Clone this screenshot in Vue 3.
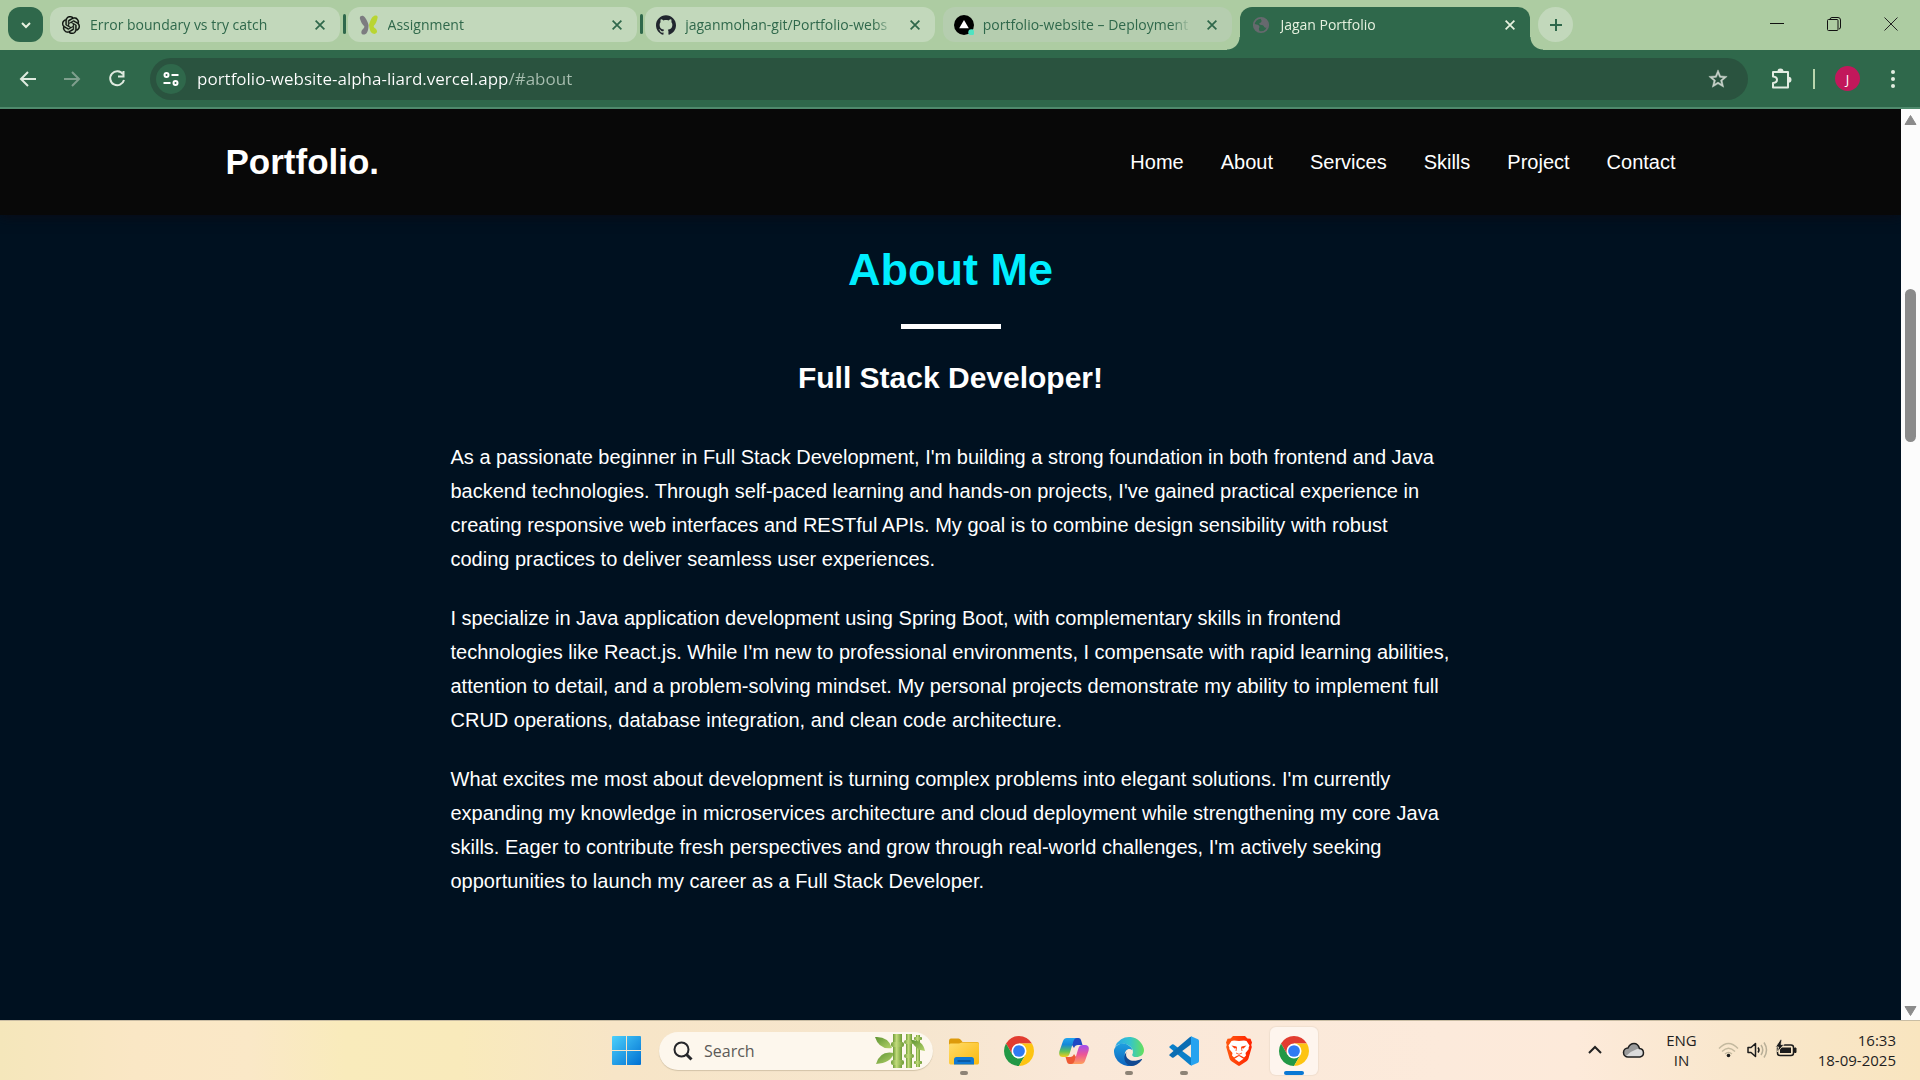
<script setup>
const links = ['Home', 'About', 'Services', 'Skills', 'Project', 'Contact']

const tabs = [
  { title: 'Error boundary vs try catch', icon: 'openai', split: true },
  { title: 'Assignment', icon: 'leaf', split: true },
  { title: 'jaganmohan-git/Portfolio-webs', icon: 'github' },
  { title: 'portfolio-website – Deployment', icon: 'vercel', dim: true },
  { title: 'Jagan Portfolio', icon: 'globe', active: true }
]

const paragraphs = [
  "As a passionate beginner in Full Stack Development, I'm building a strong foundation in both frontend and Java backend technologies. Through self-paced learning and hands-on projects, I've gained practical experience in creating responsive web interfaces and RESTful APIs. My goal is to combine design sensibility with robust coding practices to deliver seamless user experiences.",
  "I specialize in Java application development using Spring Boot, with complementary skills in frontend technologies like React.js. While I'm new to professional environments, I compensate with rapid learning abilities, attention to detail, and a problem-solving mindset. My personal projects demonstrate my ability to implement full CRUD operations, database integration, and clean code architecture.",
  "What excites me most about development is turning complex problems into elegant solutions. I'm currently expanding my knowledge in microservices architecture and cloud deployment while strengthening my core Java skills. Eager to contribute fresh perspectives and grow through real-world challenges, I'm actively seeking opportunities to launch my career as a Full Stack Developer."
]

const apps = [
  { name: 'File Explorer', icon: 'folder', running: true },
  { name: 'Google Chrome', icon: 'chrome' },
  { name: 'Copilot', icon: 'copilot' },
  { name: 'Microsoft Edge', icon: 'edge', running: true },
  { name: 'Visual Studio Code', icon: 'vscode', running: true },
  { name: 'Brave', icon: 'brave' },
  { name: 'Chrome window', icon: 'chrome', current: true }
]
</script>

<template>
  <div class="desktop">
    <svg class="sprite" aria-hidden="true">
      <defs>
        <linearGradient id="g-win" x1="0" y1="0" x2="1" y2="1">
          <stop offset="0" stop-color="#4cd0fb" /><stop offset="1" stop-color="#0070d2" />
        </linearGradient>
        <linearGradient id="g-folder" x1="0" y1="0" x2="1" y2="1">
          <stop offset="0" stop-color="#ffdc6a" /><stop offset="1" stop-color="#fcb90d" />
        </linearGradient>
        <linearGradient id="g-cop1" x1="0" y1="0" x2="0" y2="1">
          <stop offset="0" stop-color="#21a5ef" /><stop offset=".35" stop-color="#1487d8" /><stop offset=".7" stop-color="#5cc05a" /><stop offset="1" stop-color="#f5cf1b" />
        </linearGradient>
        <linearGradient id="g-cop2" x1="0" y1="0" x2="0" y2="1">
          <stop offset="0" stop-color="#a04df0" /><stop offset=".5" stop-color="#ec5597" /><stop offset="1" stop-color="#ffa05c" />
        </linearGradient>
        <linearGradient id="g-edge1" x1="0" y1="0" x2="1" y2="0">
          <stop offset="0" stop-color="#2aa5e8" /><stop offset=".5" stop-color="#33c3cf" /><stop offset="1" stop-color="#66e05b" />
        </linearGradient>
        <linearGradient id="g-edge2" x1="0" y1="0" x2="0" y2="1">
          <stop offset="0" stop-color="#1e9fe0" /><stop offset="1" stop-color="#0d64be" />
        </linearGradient>
        <linearGradient id="g-brave" x1="0" y1="0" x2="1" y2="0">
          <stop offset="0" stop-color="#ff5a10" /><stop offset="1" stop-color="#ff2000" />
        </linearGradient>
        <linearGradient id="g-stalk" x1="0" y1="0" x2="1" y2="0">
          <stop offset="0" stop-color="#6f9c38" /><stop offset=".4" stop-color="#c3dc7c" /><stop offset="1" stop-color="#6c9a35" />
        </linearGradient>
        <linearGradient id="g-leaf" x1="0" y1="0" x2="1" y2="1">
          <stop offset="0" stop-color="#5f9433" /><stop offset="1" stop-color="#b4d36a" />
        </linearGradient>
      </defs>

      <symbol id="openai" viewBox="0 0 24 24">
        <path d="M22.2819 9.8211a5.9847 5.9847 0 0 0-.5157-4.9108 6.0462 6.0462 0 0 0-6.5098-2.9A6.0651 6.0651 0 0 0 4.9807 4.1818a5.9847 5.9847 0 0 0-3.9977 2.9 6.0462 6.0462 0 0 0 .7427 7.0966 5.98 5.98 0 0 0 .511 4.9107 6.051 6.051 0 0 0 6.5146 2.9001A5.9847 5.9847 0 0 0 13.2599 24a6.0557 6.0557 0 0 0 5.7718-4.2058 5.9894 5.9894 0 0 0 3.9977-2.9001 6.0557 6.0557 0 0 0-.7475-7.0729zm-9.022 12.6081a4.4755 4.4755 0 0 1-2.8764-1.0408l.1419-.0804 4.7783-2.7582a.7948.7948 0 0 0 .3927-.6813v-6.7369l2.02 1.1686a.071.071 0 0 1 .038.052v5.5826a4.504 4.504 0 0 1-4.4945 4.4944zm-9.6607-4.1254a4.4708 4.4708 0 0 1-.5346-3.0137l.142.0852 4.783 2.7582a.7712.7712 0 0 0 .7806 0l5.8428-3.3685v2.3324a.0804.0804 0 0 1-.0332.0615L9.74 19.9502a4.4992 4.4992 0 0 1-6.1408-1.6464zM2.3408 7.8956a4.485 4.485 0 0 1 2.3655-1.9728V11.6a.7664.7664 0 0 0 .3879.6765l5.8144 3.3543-2.0201 1.1685a.0757.0757 0 0 1-.071 0l-4.8303-2.7865A4.504 4.504 0 0 1 2.3408 7.872zm16.5963 3.8558L13.1038 8.364 15.1192 7.2a.0757.0757 0 0 1 .071 0l4.8303 2.7913a4.4944 4.4944 0 0 1-.6765 8.1042v-5.6772a.79.79 0 0 0-.407-.667zm2.0107-3.0231l-.142-.0852-4.7735-2.7818a.7759.7759 0 0 0-.7854 0L9.409 9.2297V6.8974a.0662.0662 0 0 1 .0284-.0615l4.8303-2.7866a4.4992 4.4992 0 0 1 6.6802 4.66zM8.3065 12.863l-2.02-1.1638a.0804.0804 0 0 1-.038-.0567V6.0742a4.4992 4.4992 0 0 1 7.3757-3.4537l-.142.0805L8.704 5.459a.7948.7948 0 0 0-.3927.6813zm1.0976-2.3654l2.602-1.4998 2.6069 1.4998v2.9994l-2.5974 1.4997-2.6067-1.4997Z" fill="#0a0f0b" stroke="#0a0f0b" stroke-width=".4" />
      </symbol>
      <symbol id="leaf" viewBox="0 0 20 20">
        <path d="M1 4C0 1 4-.5 6 2.500C8 5 9 8 9.500 10C9.500 13 9 19 5.500 19.500C2 20 1.500 16.500 3.500 14.500C5 13 6 12 5 11C3 9 2 7 1 4Z" fill="#7c7c80" />
        <path d="M18.500 3C19.500 0 15.500-.5 13.500 2C11.500 4.500 10.500 8 10 10C10.500 13 11 18 14.500 18.800C18 19.500 19 16 17 14C15.500 12.500 14 12 15 10.500C17 8.500 17.800 6 18.500 3Z" fill="#b9d532" />
      </symbol>
      <symbol id="github" viewBox="0 0 24 24">
        <path d="M12 .297c-6.63 0-12 5.373-12 12 0 5.303 3.438 9.8 8.205 11.385.6.113.82-.258.82-.577 0-.285-.01-1.04-.015-2.04-3.338.724-4.042-1.61-4.042-1.61C4.422 18.07 3.633 17.7 3.633 17.7c-1.087-.744.084-.729.084-.729 1.205.084 1.838 1.236 1.838 1.236 1.07 1.835 2.809 1.305 3.495.998.108-.776.417-1.305.76-1.605-2.665-.3-5.466-1.332-5.466-5.93 0-1.31.465-2.38 1.235-3.22-.135-.303-.54-1.523.105-3.176 0 0 1.005-.322 3.3 1.23.96-.267 1.98-.399 3-.405 1.02.006 2.04.138 3 .405 2.28-1.552 3.285-1.23 3.285-1.23.645 1.653.24 2.873.12 3.176.765.84 1.23 1.91 1.23 3.22 0 4.61-2.805 5.625-5.475 5.92.42.36.81 1.096.81 2.22 0 1.606-.015 2.896-.015 3.286 0 .315.21.69.825.57C20.565 22.092 24 17.592 24 12.297c0-6.627-5.373-12-12-12" fill="#21262e" />
      </symbol>
      <symbol id="vercel" viewBox="0 0 20 20">
        <circle cx="10" cy="10" r="10" fill="#000" />
        <path d="M10 5L14.800 13.300H5.200Z" fill="#fff" />
        <circle cx="17.300" cy="17.300" r="3" fill="#50e3c2" />
      </symbol>
      <symbol id="globe" viewBox="0 0 20 20">
        <circle cx="10" cy="10" r="8" fill="none" stroke="#66696e" stroke-width="2" />
        <path d="M2.500 8C4 10 7 9 8 11C9 13 7 13 8 15.500L8.500 18C4 17 1.500 13 2.500 8Z" fill="#66696e" />
        <path d="M10 2C9 4 11 4 10.500 6C10 8 8 7 8 9C9 10.500 12 9.500 13 11C14 13 15 13.500 17 13C19 9 17 3 10 2Z" fill="#66696e" />
      </symbol>
      <symbol id="cross" viewBox="0 0 16 16">
        <path d="M3 3L13 13M13 3L3 13" stroke="currentColor" stroke-width="2" fill="none" />
      </symbol>

      <symbol id="folder" viewBox="0 0 30 30">
        <path d="M0 5.500Q0 2.500 2 2.500H9.500Q11 2.500 12 4L13.500 6H28Q30 6 30 8V12H0Z" fill="#dd9a0a" />
        <path d="M0 9Q0 7.500 1.500 7.500H10L13 6.500H28.500Q30 6.500 30 8.500V26.500Q30 28.500 28.500 28.500H1.500Q0 28.500 0 26.500Z" fill="url(#g-folder)" />
        <path d="M5 28.500V23.500Q5 21 7.500 21H22.500Q25 21 25 23.500V28.500Z" fill="#1079d3" />
        <path d="M8.500 25H21.500" stroke="#0a4f93" stroke-width="1.400" />
      </symbol>
      <symbol id="chrome" viewBox="2 2 44 44">
        <path d="M24 24L14.470 29.500L4.950 13A22 22 0 0 1 43.050 13H24Z" fill="#e23c30" />
        <path d="M24 24L33.530 29.500L24 46A22 22 0 0 1 4.950 13L14.470 29.500Z" fill="#229845" />
        <path d="M24 24V13H43.050A22 22 0 0 1 24 46L33.530 29.500Z" fill="#fdc411" />
        <circle cx="24" cy="24" r="11" fill="#fff" />
        <circle cx="24" cy="24" r="8.600" fill="#2f7af2" />
      </symbol>
      <symbol id="copilot" viewBox="0 0 30 30">
        <path d="M14 2H19.500Q21.500 2 22 4L23.500 9H19Q16 9 15 12L13 9Z" fill="#1d49c4" />
        <path d="M16 28H10.500Q8.500 28 8 26L6.500 21H11Q14 21 15 18L17 21Z" fill="#ee5a34" />
        <path d="M8 2H18Q15.500 2 14.500 5L10.500 18Q9.500 21 6.500 21H4Q-1 21 .5 15L4 5Q5 2 8 2Z" fill="url(#g-cop1)" />
        <path d="M22 28H12Q14.500 28 15.500 25L19.500 12Q20.500 9 23.500 9H26Q31 9 29.500 15L26 25Q25 28 22 28Z" fill="url(#g-cop2)" />
      </symbol>
      <symbol id="edge" viewBox="0 0 30 30">
        <path d="M1 11A15 15 0 0 1 30 14C30 19 26 21 22.500 21C19 21 17.500 19.500 18.500 18C19.500 16 19 12 15 9.500C10 6.500 4 8 1 11Z" fill="url(#g-edge1)" />
        <path d="M0 14C2 8 9 6 14 9C16.500 10.500 18 12 18.300 14C14 11 10 15 11 20C12 25 17 29 21 28.700A15 15 0 0 1 0 14Z" fill="url(#g-edge2)" />
        <path d="M12.500 16C10 23 18 27.500 27.500 23C28 22.800 28.300 23.300 28 23.700C25 28 21 30 17 30C11 29 8 21 12.500 16Z" fill="#114a93" />
      </symbol>
      <symbol id="vscode" viewBox="0 0 30 30">
        <path d="M.500 10.500L3 8.500Q3.800 8 4.700 8.600L22.500 22V29.500L21 29L.700 11.700Q0 11 .500 10.500Z" fill="#0b7fc9" />
        <path d="M.500 19.500L3 21.500Q3.800 22 4.700 21.400L22.500 8V.500L21 1L.700 18.300Q0 19 .500 19.500Z" fill="#0b6db3" />
        <path d="M22 .200L29 3.300Q30 3.800 30 5V25Q30 26.200 29 26.700L22 29.800Z" fill="#27a3f0" />
      </symbol>
      <symbol id="brave" viewBox="0 0 30 30">
        <path d="M9 0H21L23.500 2.500L26.500 2.800L28 6.500L27.200 9L27.800 11L24.500 22.500Q24 24 22.500 25.200L16 29.600Q15 30.300 14 29.600L7.500 25.200Q6 24 5.500 22.500L2.200 11L2.800 9L2 6.500L3.500 2.800L6.500 2.500Z" fill="url(#g-brave)" />
        <path d="M15 5L20 4.500L22.500 5L25.500 9.500L24.500 12L24.800 13L21.500 17L22 19.500L20 21.500L17.500 20L15 19L12.500 20L10 21.500L8 19.500L8.500 17L5.200 13L5.500 12L4.500 9.500L7.500 5L10 4.500Z" fill="#fff" />
        <path d="M15 20L19.500 22.800L15 26L10.500 22.800Z" fill="#fff" />
        <path d="M7.500 9.500L12.500 10.500L13 12L10.500 12.500ZM22.500 9.500L17.500 10.500L17 12L19.500 12.500Z" fill="#ff3a08" />
        <path d="M12.500 12L12 15M17.500 12L18 15M12 17L15 18.300L18 17" fill="none" stroke="#ff3a08" stroke-width=".8" />
      </symbol>
    </svg>

    <header class="browser">
      <div class="strip">
        <button class="tab-search" aria-label="Search tabs">
          <svg width="12" height="12" viewBox="0 0 12 12"><path d="M2 4L6 8L10 4" fill="none" stroke="#e6f1df" stroke-width="2" /></svg>
        </button>
        <div class="tabs">
          <div v-for="t in tabs" :key="t.title" class="tab" :class="{ active: t.active, dim: t.dim, split: t.split }">
            <svg class="favicon" :class="t.icon"><use :href="'#' + t.icon" /></svg>
            <button class="title">{{ t.title }}</button>
            <button class="close" aria-label="Close tab"><svg width="14" height="14"><use href="#cross" /></svg></button>
          </div>
        </div>
        <button class="new-tab" aria-label="New tab">
          <svg width="14" height="14" viewBox="0 0 14 14"><path d="M7 1V13M1 7H13" stroke="#2f684b" stroke-width="2" /></svg>
        </button>
        <div class="window-controls">
          <button aria-label="Minimize"><svg width="14" height="14" viewBox="0 0 14 14"><path d="M0 6.500H14" stroke="#111" /></svg></button>
          <button aria-label="Restore"><svg width="14" height="14" viewBox="0 0 14 14"><path d="M3 2.500Q3 .500 5 .500H11Q13.500 .500 13.500 3V10Q13.500 12 12 12" fill="none" stroke="#111" /><rect x=".5" y="2.500" width="10.500" height="11" rx="1" fill="none" stroke="#111" /></svg></button>
          <button aria-label="Close"><svg width="14" height="14" viewBox="0 0 14 14"><path d="M.5 .5L13.500 13.500M13.500 .5L.5 13.500" stroke="#222" /></svg></button>
        </div>
      </div>

      <div class="toolbar">
        <button class="tool" aria-label="Back"><svg width="24" height="24" viewBox="0 0 24 24"><path d="M20 12H5M12 5L5 12L12 19" fill="none" stroke="#dfeadf" stroke-width="2" /></svg></button>
        <button class="tool" aria-label="Forward"><svg width="24" height="24" viewBox="0 0 24 24"><path d="M4 12H19M12 5L19 12L12 19" fill="none" stroke="#7f9f8d" stroke-width="2" /></svg></button>
        <button class="tool" aria-label="Reload"><svg width="24" height="24" viewBox="0 0 24 24"><path d="M19 7.300A7 7 0 1 0 20 13" fill="none" stroke="#dfeadf" stroke-width="2" /><path d="M20.500 4V10.500H14V8.500H18.500V4Z" fill="#dfeadf" /></svg></button>
        <div class="omnibox">
          <button class="site-info" aria-label="Site information">
            <svg width="16" height="16" viewBox="0 0 16 16" fill="none" stroke="#fff" stroke-width="2"><circle cx="3.500" cy="4" r="2" /><path d="M8.500 4H15.500" /><circle cx="12.500" cy="12" r="2" /><path d="M.5 12H7.500" /></svg>
          </button>
          <input class="url" type="text" aria-label="Address" value="portfolio-website-alpha-liard.vercel.app/#about" />
          <button class="star" aria-label="Bookmark this tab">
            <svg width="22" height="22" viewBox="0 0 24 24"><path d="M22 9.240l-7.190-.62L12 2 9.190 8.630 2 9.240l5.460 4.730L5.820 21 12 17.270 18.180 21l-1.630-7.030L22 9.240zM12 15.400l-3.760 2.270 1-4.280-3.320-2.880 4.380-.38L12 6.100l1.710 4.040 4.380.38-3.320 2.880 1 4.280L12 15.400z" fill="#c8d2ca" stroke="#c8d2ca" stroke-width=".5" /></svg>
          </button>
        </div>
        <button class="tool" aria-label="Extensions">
          <svg width="24" height="24" viewBox="0 0 24 24"><path d="M3 5H18V20.500H3V16Q7 15.500 7 12.700T3 9.500Z" fill="none" stroke="#e2ece1" stroke-width="2" stroke-linejoin="round" /><path d="M7.500 4.500A3 3 0 0 1 13.500 4.500ZM18.500 9.700A3 3 0 0 1 18.500 15.700Z" fill="#e2ece1" /></svg>
        </button>
        <span class="divider"></span>
        <button class="avatar">J</button>
        <button class="tool menu" aria-label="Menu"><svg width="24" height="24" viewBox="0 0 24 24" fill="#e2ece1"><circle cx="12" cy="5" r="2" /><circle cx="12" cy="12" r="2" /><circle cx="12" cy="19" r="2" /></svg></button>
      </div>
    </header>

    <div class="viewport">
      <div class="page">
        <div class="site-header">
          <div class="site-bar">
            <a class="logo" href="#home">Portfolio.</a>
            <nav>
              <a v-for="l in links" :key="l" :href="'#' + l.toLowerCase()">{{ l }}</a>
            </nav>
          </div>
        </div>
        <main class="about">
          <h1>About Me</h1>
          <div class="rule"></div>
          <h2>Full Stack Developer!</h2>
          <div class="copy">
            <p v-for="p in paragraphs" :key="p">{{ p }}</p>
          </div>
        </main>
      </div>
      <div class="scrollbar">
        <svg width="13" height="20" viewBox="0 0 13 20"><path d="M6.500 6.500L12 15.500H1Z" fill="#8b8b8b" stroke="#8b8b8b" stroke-linejoin="round" /></svg>
        <span class="before"></span>
        <span class="thumb"></span>
        <span class="after"></span>
        <svg width="13" height="20" viewBox="0 0 13 20"><path d="M6.500 15.500L12 6.500H1Z" fill="#8b8b8b" stroke="#8b8b8b" stroke-linejoin="round" /></svg>
      </div>
    </div>

    <footer class="taskbar">
      <div></div>
      <div class="dock">
        <button class="app start" aria-label="Start">
          <svg width="29" height="29" viewBox="0 0 29 29" fill="url(#g-win)"><path d="M1 0H14V14H0V1Q0 0 1 0ZM15 0H28Q29 0 29 1V14H15ZM0 15H14V29H1Q0 29 0 28ZM15 15H29V28Q29 29 28 29H15Z" /></svg>
        </button>
        <label class="search">
          <svg width="20" height="20" viewBox="0 0 20 20"><circle cx="8.500" cy="8.500" r="7" fill="none" stroke="#25262a" stroke-width="2" /><path d="M13.500 13.500L18.500 18.500" stroke="#25262a" stroke-width="3" /></svg>
          <input type="search" placeholder="Search" aria-label="Search" />
          <svg width="52" height="34" viewBox="0 0 52 34">
            <path d="M1 3Q14 2 18 14Q5 16 1 3Z" fill="url(#g-leaf)" />
            <path d="M2 30Q6 16 20 19Q17 29 2 30Z" fill="url(#g-leaf)" />
            <g fill="url(#g-stalk)">
              <rect x="19" y="0" width="9" height="34" /><rect x="17" y="8" width="13" height="5" rx="2" /><rect x="17" y="26" width="13" height="5" rx="2" />
              <rect x="32" y="0" width="6" height="34" /><rect x="30" y="6" width="10" height="4" rx="2" /><rect x="30" y="20" width="10" height="4" rx="2" />
              <rect x="42" y="1" width="4" height="32" /><rect x="40" y="3" width="8" height="3" rx="1" /><rect x="40" y="27" width="8" height="3" rx="1" />
            </g>
            <path d="M37 6Q49 6 51 17Q42 17 37 6Z" fill="url(#g-leaf)" />
          </svg>
        </label>
        <button v-for="a in apps" :key="a.name" class="app" :class="{ running: a.running, current: a.current }" :aria-label="a.name">
          <svg width="30" height="30"><use :href="'#' + a.icon" /></svg>
        </button>
      </div>
      <div class="tray">
        <svg width="14" height="14" viewBox="0 0 14 14"><path d="M1 10L7 4L13 10" fill="none" stroke="#222" stroke-width="2" /></svg>
        <svg class="cloud" width="22" height="16" viewBox="0 0 22 16">
          <path d="M5 15A4 4 0 0 1 5 6Q7 1.500 11 1.500T16.500 6.500A4.300 4.300 0 0 1 17 15Z" fill="#9b9b9b" />
          <path d="M3 14Q8 9 14 7Q17 6 20 9Q22 15 16.500 15H5Z" fill="#dcdcdc" />
          <path d="M5 15A4 4 0 0 1 5 6Q7 1.500 11 1.500T16.500 6.500A4.300 4.300 0 0 1 17 15Z" fill="none" stroke="#1f1f1f" stroke-width="1.500" />
        </svg>
        <div class="lang">ENG<br />IN</div>
        <div class="status">
          <svg width="21" height="20" viewBox="0 0 21 20" fill="none" stroke="#c4b99f" stroke-width="1.400"><path d="M1 8.500Q10.500 -1.500 20 8.500M4 11.500Q10.500 5 17 11.500M7 14Q10.500 11 14 14" /><circle cx="10.500" cy="15.500" r="1.800" fill="#1c1c1c" stroke="none" /></svg>
          <svg width="21" height="20" viewBox="0 0 21 20" fill="none" stroke-width="1.500"><path d="M1 7.500H4L8.500 3.500V16.500L4 12.500H1Z" stroke="#1c1c1c" stroke-linejoin="round" /><path d="M11 7.500Q13 10 11 12.500" stroke="#1c1c1c" /><path d="M14 5Q17.500 10 14 15M17 2.500Q22 10 17 17.500" stroke="#b9af98" /></svg>
          <svg width="21" height="20" viewBox="0 0 21 20"><rect x="1.500" y="5" width="16" height="10.500" rx="2.500" fill="none" stroke="#1c1c1c" stroke-width="1.500" /><rect x="4" y="7.500" width="11" height="5.500" fill="#1c1c1c" /><path d="M18.500 8H20V12.500H18.500Z" fill="#1c1c1c" stroke="#1c1c1c" /><path d="M4.500 -.5L-.5 7H2.500L1.500 12L8 4.500H5L6 -.5Z" fill="#1c1c1c" stroke="#f9e8cd" stroke-width=".8" /></svg>
        </div>
        <div class="clock">16:33<br />18-09-2025</div>
      </div>
    </footer>
  </div>
</template>

<style>
body {
  margin: 0;
  background: #001120;
}
</style>

<style scoped>
.desktop {
  display: flex;
  flex-direction: column;
  min-height: 100vh;
  font-family: "Open Sans", "Noto Sans", sans-serif;
}
.desktop *,
.desktop *::before,
.desktop *::after {
  box-sizing: border-box;
}
.sprite {
  position: absolute;
  width: 0;
  height: 0;
}
svg {
  display: block;
  flex: none;
  overflow: visible;
}
button,
input {
  margin: 0;
  padding: 0;
  border: 0;
  background: none;
  font: inherit;
  color: inherit;
  outline: none;
}
button {
  display: flex;
  align-items: center;
  justify-content: center;
}
a {
  color: inherit;
  text-decoration: none;
}

/* Tab strip */
.browser {
  position: relative;
  z-index: 1;
}
.strip {
  display: flex;
  align-items: flex-start;
  height: 50px;
  padding: 7px 1px 0 8px;
  background: #adcca2;
}
.tab-search,
.new-tab {
  flex: none;
  width: 35px;
  height: 35px;
}
.tab-search {
  border-radius: 12px;
  background: #2f684b;
}
.new-tab {
  margin-left: 8px;
  border-radius: 50%;
  background: #c2d8bb;
}
.tabs {
  display: flex;
  flex: 0 1 1480px;
  gap: 8px;
  min-width: 0;
  margin-left: 7px;
}
.tab {
  position: relative;
  display: flex;
  flex: 1 1 0;
  align-items: center;
  min-width: 0;
  height: 35px;
  padding: 0 13px 0 12px;
  border-radius: 12px;
  background: #c2d8bb;
  color: #2f684b;
  font-size: 14px;
}
.tab.dim {
  background: #b5cdaf;
}
.tab.split::after {
  content: "";
  position: absolute;
  top: 7px;
  right: -6px;
  width: 3px;
  height: 20px;
  border-radius: 2px;
  background: #2f684b;
}
.tab.active {
  height: 43px;
  padding-bottom: 8px;
  border-radius: 12px 12px 0 0;
  background: #2f684b;
  color: #e6f1df;
}
.tab.active::before,
.tab.active::after {
  content: "";
  position: absolute;
  bottom: 0;
  width: 13px;
  height: 13px;
}
.tab.active::before {
  left: -13px;
  background: radial-gradient(circle at 0 0, transparent 12px, #2f684b 13px);
}
.tab.active::after {
  right: -13px;
  background: radial-gradient(circle at 100% 0, transparent 12px, #2f684b 13px);
}
.favicon {
  width: 18px;
  height: 18px;
}
.favicon.leaf,
.favicon.github,
.favicon.vercel {
  width: 20px;
  height: 20px;
  margin: 0 -1px;
}
.title {
  display: block;
  flex: 1;
  min-width: 0;
  margin-left: 10px;
  overflow: hidden;
  text-align: left;
  white-space: nowrap;
  line-height: 20px;
  -webkit-mask-image: linear-gradient(90deg, #000 calc(100% - 20px), transparent);
  mask-image: linear-gradient(90deg, #000 calc(100% - 20px), transparent);
}
.close {
  margin-left: 14px;
}
.window-controls {
  display: flex;
  margin-left: auto;
}
.window-controls button {
  width: 57px;
  height: 34px;
}

/* Toolbar */
.toolbar {
  display: flex;
  align-items: center;
  height: 59px;
  padding: 0 13px 0 6px;
  border-bottom: 2px solid #4f8a6c;
  background: #2f684b;
}
.tool {
  flex: none;
  width: 44px;
  height: 36px;
}
.omnibox {
  display: flex;
  flex: 1;
  align-items: center;
  min-width: 0;
  height: 42px;
  margin: 0 12px;
  padding: 0 19px 0 6px;
  border-radius: 21px;
  background: #2a533f;
}
.site-info {
  flex: none;
  width: 30px;
  height: 30px;
  border-radius: 50%;
  background: #2f684b;
}
.url {
  flex: 1;
  min-width: 0;
  height: 30px;
  margin-left: 11px;
  font-size: 17px;
  color: #fff;
  -webkit-text-fill-color: transparent;
  background: linear-gradient(90deg, #fff 311px, #a9bfb1 311px);
  -webkit-background-clip: text;
  background-clip: text;
}
.divider {
  width: 2px;
  height: 20px;
  margin: 0 20px 0 9px;
  background: #b9d6ae;
}
.avatar {
  flex: none;
  width: 25px;
  height: 25px;
  border-radius: 50%;
  background: #c2185b;
  color: #fff;
  font-size: 13px;
}
.toolbar .menu {
  margin: 0 -8px 0 11px;
}

/* Page */
.viewport {
  display: flex;
  flex: 1;
}
.page {
  flex: 1;
  min-width: 0;
  background: #001120;
  color: #fff;
  font-family: "Liberation Sans", Arial, sans-serif;
}
.site-header {
  padding: 0 24px;
  background: #080808;
  box-shadow: 0 1px 12px #0a0a14;
}
.site-bar {
  display: flex;
  align-items: center;
  justify-content: space-between;
  max-width: 1450px;
  min-height: 106px;
  margin: 0 auto;
}
.logo {
  font-size: 35px;
  font-weight: 700;
}
nav {
  display: flex;
  gap: 37px;
  font-size: 20px;
}
.about {
  display: flex;
  flex-direction: column;
  align-items: center;
  padding: 29px 24px 80px;
}
h1 {
  margin: 0;
  color: #00eeff;
  font-size: 45px;
  line-height: 52px;
}
.rule {
  width: 100px;
  height: 5px;
  margin: 28px 0 31px;
  background: #fff;
}
h2 {
  margin: 0;
  font-size: 30px;
  line-height: 36px;
}
.copy {
  max-width: 1000px;
  margin-top: 44px;
  font-size: 20px;
  line-height: 34px;
}
.copy p {
  margin: 0 0 25px;
}
.scrollbar {
  display: flex;
  flex: none;
  flex-direction: column;
  align-items: center;
  width: 19px;
  background: #fcfcfc;
}
.before {
  flex: 160;
}
.thumb {
  flex: 153;
  width: 11px;
  border-radius: 6px;
  background: #8b8b8b;
}
.after {
  flex: 558;
}

/* Taskbar */
.taskbar {
  display: grid;
  grid-template-columns: 1fr auto 1fr;
  align-items: center;
  height: 60px;
  border-top: 1px solid #c9bda4;
  background: linear-gradient(90deg, #f5e7bb 0, #fae7c5 7%, #fae8c7 13%, #f9ebbb 18%, #f9eabb 24%, #f7e5c7 32%, #f6e6cf 48%, #fae8d8 56%, #fceadb 75%, #fdeada 82%, #f9e7cd 90%, #f9e5bf 100%);
  color: #1f1f1f;
}
.dock {
  display: flex;
  align-items: center;
  gap: 7px;
}
.app {
  position: relative;
  width: 48px;
  height: 48px;
  border-radius: 6px;
}
.app.current {
  background: #fef5ee;
  box-shadow: 0 0 1px 1px #f0dfcf;
}
.app.running::after,
.app.current::after {
  content: "";
  position: absolute;
  bottom: 0;
  width: 8px;
  height: 4px;
  border-radius: 2px;
  background: #8d8376;
}
.app.current::after {
  width: 20px;
  background: #0a78d4;
}
.search {
  display: flex;
  align-items: center;
  width: 274px;
  height: 38px;
  margin-left: 2px;
  padding: 0 7px 0 14px;
  border-radius: 19px;
  background: #fdf7ed;
  box-shadow: 0 1px 1px #d3c3a8;
}
.search input {
  flex: 1;
  min-width: 0;
  margin-left: 11px;
  font-size: 16px;
}
.search input::placeholder {
  color: #5c5a57;
  opacity: 1;
}
.tray {
  display: flex;
  align-items: center;
  justify-content: flex-end;
  gap: 21px;
  padding: 0 24px 2px 0;
  font-size: 15px;
  line-height: 20px;
}
.lang {
  text-align: center;
}
.status {
  display: flex;
  gap: 8px;
}
.clock {
  text-align: right;
}
</style>
